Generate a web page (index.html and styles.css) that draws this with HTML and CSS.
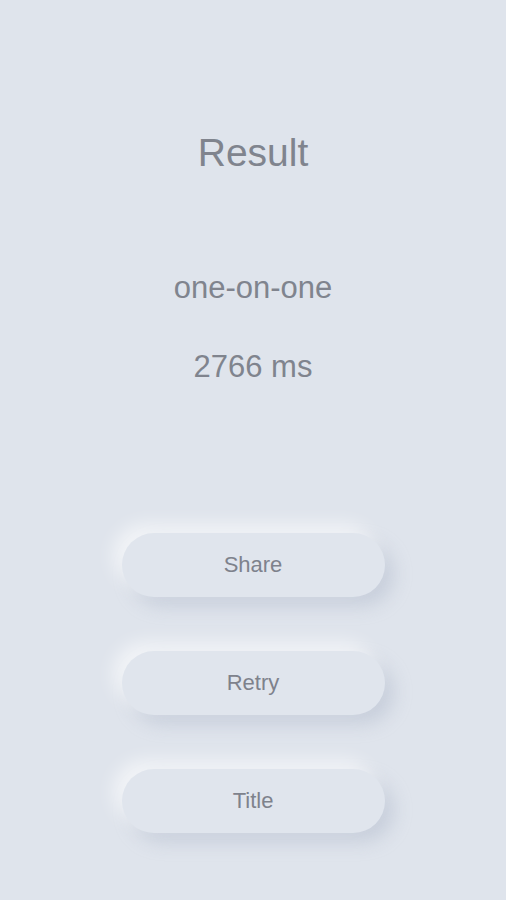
FILE: index.html
```html
<!DOCTYPE html>
<html lang="en">
<head>
    <meta charset="UTF-8">
    <meta name="viewport" content="width=device-width, initial-scale=1.0">
    <title>Result</title>
    <link rel="stylesheet" href="styles.css">
</head>
<body>
    <div class="screen">
        <h1 class="title">Result</h1>
        <div class="mode">one-on-one</div>
        <div class="time">2766 ms</div>
        <div class="actions">
            <button type="button" class="neu-btn">Share</button>
            <button type="button" class="neu-btn">Retry</button>
            <button type="button" class="neu-btn">Title</button>
        </div>
    </div>
</body>
</html>
```

FILE: styles.css
```css
body {
    font-family: "Liberation Sans", Arial, sans-serif;
    background-color: #dfe4ec;
    color: #80848e;
    margin: 0;
    padding: 0;
}
.screen {
    display: flex;
    flex-direction: column;
    align-items: center;
    padding-top: 133px;
    min-height: 900px;
    box-sizing: border-box;
}
.title {
    margin: 0;
    font-size: 39px;
    font-weight: normal;
    line-height: 40px;
}
.mode {
    margin-top: 99px;
    font-size: 31px;
    line-height: 32px;
}
.time {
    margin-top: 47px;
    font-size: 31px;
    line-height: 32px;
}
.actions {
    margin-top: 150px;
    display: flex;
    flex-direction: column;
    gap: 54px;
}
.neu-btn {
    width: 263px;
    height: 64px;
    border: none;
    border-radius: 32px;
    background-color: #e0e5ed;
    color: #7e828c;
    font-family: inherit;
    font-size: 22px;
    cursor: pointer;
    box-shadow: -9px -9px 18px rgba(255, 255, 255, 0.6),
                9px 9px 18px rgba(166, 176, 196, 0.4);
}
```
